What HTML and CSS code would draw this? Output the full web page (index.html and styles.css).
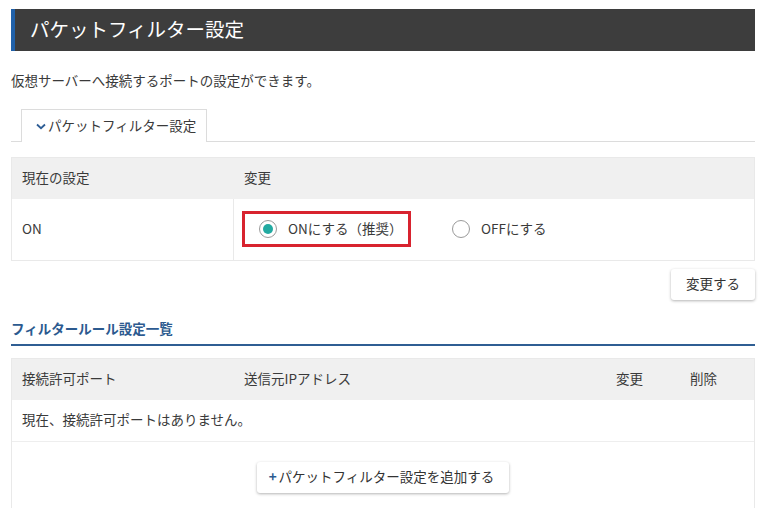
FILE: index.html
```html
<!DOCTYPE html>
<html lang="ja">
  <head>
    <meta charset="UTF-8" />
    <title>パケットフィルター設定</title>
    <link rel="stylesheet" href="styles.css">
  </head>
  <body>
    <div class="page">
      <h1 class="page-title">パケットフィルター設定</h1>
      <p class="lead">仮想サーバーへ接続するポートの設定ができます。</p>

      <div class="tabs">
        <div class="tab active">
          <svg class="chev" width="10" height="7" viewBox="0 0 10 7"><path d="M1 1.5 L5 5.2 L9 1.5" fill="none" stroke="#2d5d95" stroke-width="1.8"/></svg>パケットフィルター設定
        </div>
      </div>

      <div class="grid grid-setting">
        <div class="cell head">現在の設定</div>
        <div class="cell head">変更</div>
        <div class="cell col-first">ON</div>
        <div class="cell options">
          <label class="radio highlight">
            <span class="dot checked"></span>ONにする（推奨）
          </label>
          <label class="radio">
            <span class="dot"></span>OFFにする
          </label>
        </div>
      </div>

      <div class="actions">
        <div class="btn">変更する</div>
      </div>

      <h2 class="section-title">フィルタールール設定一覧</h2>

      <div class="grid grid-rules">
        <div class="cell head">接続許可ポート</div>
        <div class="cell head">送信元IPアドレス</div>
        <div class="cell head">変更</div>
        <div class="cell head">削除</div>
        <div class="cell empty">現在、接続許可ポートはありません。</div>
        <div class="cell add-row">
          <div class="btn btn-add"><span class="plus">+</span>パケットフィルター設定を追加する</div>
        </div>
      </div>
    </div>
  </body>
</html>
```

FILE: styles.css
```css
body {
  margin: 0;
  background: #fff;
  font-family: "Noto Sans CJK JP", "Noto Sans", sans-serif;
  font-size: 13.5px;
  color: #3a3a3a;
}

.page {
  width: 744px;
  padding: 9px 0 0 11px;
}

.page-title {
  margin: 0;
  height: 42px;
  line-height: 40px;
  padding-bottom: 2px;
  box-sizing: border-box;
  background: #3d3d3d;
  border-left: 4px solid #2161a8;
  padding-left: 15px;
  color: #fff;
  font-size: 19.5px;
  font-weight: normal;
}

.lead {
  margin: 19px 0 0;
  line-height: 20px;
}

.tabs {
  margin-top: 19px;
  height: 32px;
  border-bottom: 1px solid #dcdcdc;
  padding-left: 10px;
  display: flex;
}

.tab {
  width: 186px;
  height: 33px;
  line-height: 31px;
  padding-left: 14px;
  border: 1px solid #dcdcdc;
  border-bottom: none;
  background: #fff;
  box-sizing: border-box;
  margin-bottom: -1px;
}

.chev {
  margin-right: 2px;
  vertical-align: 1px;
}

.grid {
  display: grid;
  border: 1px solid #e9e9e9;
  box-sizing: border-box;
}

.grid-setting {
  margin-top: 15px;
  grid-template-columns: 222px 1fr;
  grid-template-rows: 41px 61px;
}

.grid-rules {
  margin-top: 12px;
  grid-template-columns: 222px 372px 74px 1fr;
  grid-template-rows: 41px 42px 80px;
}

.cell {
  display: flex;
  align-items: center;
  padding-left: 10px;
  padding-bottom: 3px;
}

.head {
  background: #f0f0f0;
}

.col-first {
  border-right: 1px solid #e9e9e9;
}

.options {
  padding-left: 8px;
  padding-bottom: 1px;
}

.radio {
  display: flex;
  align-items: center;
  box-sizing: border-box;
  height: 36px;
  width: 169px;
  border: 3px solid transparent;
  padding-left: 14px;
  padding-bottom: 2px;
  margin-right: 24px;
  white-space: nowrap;
}

.highlight {
  border-color: #d8232f;
}

.dot {
  flex: none;
  width: 16px;
  height: 16px;
  border: 1px solid #9a9a9a;
  border-radius: 50%;
  margin-right: 11px;
  position: relative;
  top: 1px;
}

.dot.checked::after {
  content: "";
  position: absolute;
  left: 3px;
  top: 3px;
  width: 10px;
  height: 10px;
  border-radius: 50%;
  background: #22aaa1;
}

.actions {
  display: flex;
  justify-content: flex-end;
  margin-top: 8px;
}

.btn {
  height: 31px;
  line-height: 29px;
  padding: 0 15px 2px;
  box-sizing: border-box;
  background: #fff;
  border-radius: 3px;
  box-shadow: 0 1px 3px rgba(0, 0, 0, 0.3);
  color: #333;
}

.section-title {
  margin: 19px 0 0;
  font-size: 13.5px;
  color: #2c5a8f;
  line-height: 19px;
  padding-bottom: 6px;
  border-bottom: 2px solid #2f5e93;
}

.empty {
  grid-column: 1 / 5;
  border-bottom: 1px solid #eeeeee;
}

.add-row {
  grid-column: 1 / 5;
  justify-content: center;
  align-items: flex-start;
  padding: 20px 0 0;
}

.btn-add {
  padding: 0 15px 2px 12px;
}

.plus {
  color: #2c5a8f;
  font-weight: bold;
  margin-right: 2px;
}
```
